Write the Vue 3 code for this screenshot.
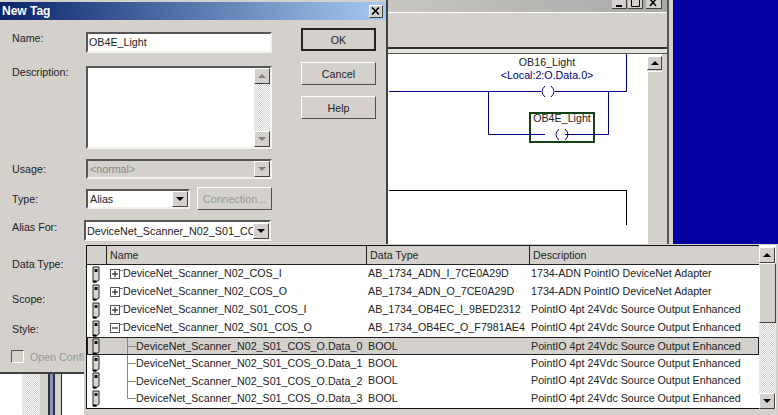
<template>
  <div class="desktop">
    <!-- ladder editor window behind the dialog -->
    <div class="editor">
      <div class="editor-title">
        <span class="win-btn">
          <svg width="9" height="8"><rect x="1" y="5" width="6" height="2" fill="#000" /></svg>
        </span>
        <span class="win-btn">
          <svg width="11" height="8"><path d="M1.500 0V6.500H9.500V0" fill="none" stroke="#000" /></svg>
        </span>
        <span class="win-btn win-close">
          <svg width="11" height="8"><path d="M2 -1l6 7M8 -1l-6 7" stroke="#000" stroke-width="1.500" /></svg>
        </span>
      </div>
      <div class="editor-toolbar"></div>
      <div class="editor-strip"></div>
      <div class="editor-main">
        <svg class="ladder" width="240" height="175" viewBox="0 0 240 175">
          <path d="M0 37.500H237.500V0" fill="none" stroke="#000080" />
          <path d="M99.500 37.500V80.500H219.500V37.500" fill="none" stroke="#000080" />
          <rect x="141" y="59" width="64" height="29" fill="#fff" stroke="#134313" stroke-width="2" />
          <path d="M141 80.500H219.500" fill="none" stroke="#000080" />
          <rect x="156" y="76" width="20" height="9" fill="#fff" />
          <rect x="152" y="33" width="14" height="9" fill="#fff" />
          <path d="M156 32q-6 5.500 0 11M162 32q6 5.500 0 11" fill="none" stroke="#000080" />
          <path d="M170 75q-6 5.500 0 11M176 75q6 5.500 0 11" fill="none" stroke="#000080" />
          <path d="M0 136.500H237" stroke="#000" />
          <path d="M237.500 136V171" stroke="#000" />
          <text x="158" y="12" text-anchor="middle" class="rung-text">OB16_Light</text>
          <text x="158" y="25" text-anchor="middle" class="rung-addr">&lt;Local:2:O.Data.0&gt;</text>
          <text x="173" y="68" text-anchor="middle" class="rung-text">OB4E_Light</text>
        </svg>
        <div class="editor-scroll">
          <span class="scroll-btn"><i class="arrow-up"></i></span>
          <span class="scroll-thumb"></span>
        </div>
      </div>
    </div>
    <div class="blue"></div>

    <!-- strips of other windows under the dialog -->
    <div class="under">
      <span class="u-dither"></span>
      <span class="u-grey"></span>
      <span class="u-dark"></span>
      <span class="u-blue"></span>
      <span class="u-dark"></span>
      <span class="u-grey2"></span>
      <span class="u-dark1"></span>
    </div>

    <div class="dialog">
      <div class="titlebar">
        <span>New Tag</span>
        <span class="title-x">
          <svg width="10" height="9"><path d="M1 0.500l7 7M8 0.500l-7 7" stroke="#000" stroke-width="1.600" /></svg>
        </span>
      </div>
      <div class="dialog-body">
        <div class="form">
          <div class="row row-name">
            <label>Name:</label>
            <div class="sunken input">OB4E_Light</div>
          </div>
          <div class="row row-desc">
            <label>Description:</label>
            <div class="sunken textarea">
              <div class="vscroll">
                <span class="scroll-btn"><i class="arrow-up grey"></i></span>
                <span class="dither"></span>
                <span class="scroll-btn"><i class="arrow-down grey"></i></span>
              </div>
            </div>
          </div>
          <div class="row row-usage">
            <label>Usage:</label>
            <div class="sunken select disabled">
              <span>&lt;normal&gt;</span>
              <span class="scroll-btn"><i class="arrow-down grey"></i></span>
            </div>
          </div>
          <div class="row row-type">
            <label>Type:</label>
            <div class="sunken select type">
              <span>Alias</span>
              <span class="scroll-btn"><i class="arrow-down"></i></span>
            </div>
            <button class="btn conn">Connection...</button>
          </div>
          <div class="row row-alias">
            <label>Alias For:</label>
            <div class="sunken select alias">
              <span class="alias-text">DeviceNet_Scanner_N02_S01_CC</span>
              <span class="scroll-btn"><i class="arrow-down"></i></span>
            </div>
          </div>
          <div class="row row-dtype"><label>Data Type:</label></div>
          <div class="row row-scope"><label>Scope:</label></div>
          <div class="row row-style"><label>Style:</label></div>
          <div class="row row-open">
            <span class="check"></span>
            <span class="open-text">Open Confi</span>
          </div>
        </div>
        <div class="buttons">
          <button class="btn btn-default">OK</button>
          <button class="btn">Cancel</button>
          <button class="btn">Help</button>
        </div>
      </div>
    </div>

    <!-- tag browser dropdown -->
    <div class="browser">
      <div class="grid">
        <div class="head">
          <span class="c-icon"></span>
          <span class="c-name">Name</span>
          <span class="c-type">Data Type</span>
          <span class="c-desc">Description</span>
        </div>
        <div
          v-for="(row, i) in rows"
          :key="row.name"
          class="tag-row"
          :class="{ selected: row.selected, child: row.child }"
        >
          <span class="c-icon">
            <svg width="8" height="17" viewBox="0 0 8 17">
              <path d="M1 1h6v13l-3 2h-3z" fill="#d8d8d0" stroke="#222" />
              <rect x="2.500" y="3" width="3" height="3" fill="#111" />
              <path d="M1 15.500h3.500" stroke="#000" stroke-width="2" />
            </svg>
          </span>
          <span class="c-name">
            <svg v-if="!row.child" class="tree" width="13" height="11" viewBox="0 0 13 11">
              <rect x="0.500" y="0.500" width="9" height="9" fill="#fff" stroke="#555" />
              <path d="M2 5h6" stroke="#000" />
              <path v-if="row.closed" d="M5 2v6" stroke="#000" />
              <path d="M10 1.500h3" stroke="#777" />
            </svg>
            <svg v-else class="tree-child" width="9" height="18" viewBox="0 0 9 18">
              <path :d="i === rows.length - 1 ? 'M0.500 0V9.500H9' : 'M0.500 0V18M0.500 9.500H9'" fill="none" stroke="#888" />
            </svg>
            {{ row.name }}
          </span>
          <span class="c-type">{{ row.type }}</span>
          <span class="c-desc">{{ row.desc }}</span>
        </div>
      </div>
      <div class="list-scroll">
        <span class="scroll-btn"><i class="arrow-up"></i></span>
        <span class="list-thumb"></span>
        <span class="dither"></span>
        <span class="scroll-btn"><i class="arrow-down"></i></span>
      </div>
    </div>
  </div>
</template>

<script setup>
const pointIO = 'PointIO 4pt 24Vdc Source Output Enhanced'
const adapter = '1734-ADN PointIO DeviceNet Adapter'
const base = 'DeviceNet_Scanner_N02_S01_COS_O'

const rows = [
  { name: 'DeviceNet_Scanner_N02_COS_I', type: 'AB_1734_ADN_I_7CE0A29D', desc: adapter, closed: true },
  { name: 'DeviceNet_Scanner_N02_COS_O', type: 'AB_1734_ADN_O_7CE0A29D', desc: adapter, closed: true },
  { name: 'DeviceNet_Scanner_N02_S01_COS_I', type: 'AB_1734_OB4EC_I_9BED2312', desc: pointIO, closed: true },
  { name: base, type: 'AB_1734_OB4EC_O_F7981AE4', desc: pointIO, closed: false },
  { name: base + '.Data_0', type: 'BOOL', desc: pointIO, child: true, selected: true },
  { name: base + '.Data_1', type: 'BOOL', desc: pointIO, child: true },
  { name: base + '.Data_2', type: 'BOOL', desc: pointIO, child: true },
  { name: base + '.Data_3', type: 'BOOL', desc: pointIO, child: true }
]
</script>

<style>
html,
body {
  margin: 0;
  background: #fff;
}
</style>

<style scoped>
.desktop {
  position: relative;
  width: 778px;
  height: 415px;
  overflow: hidden;
  background: #fff;
  font-family: 'Liberation Sans', Arial, sans-serif;
  font-size: 10.7px;
  color: #222;
}

/* editor window */
.editor {
  position: absolute;
  left: 380px;
  top: 0;
  width: 289px;
  height: 415px;
  box-sizing: border-box;
  display: flex;
  flex-direction: column;
  background: #d4d1cc;
  border-right: 2px solid #555;
  box-shadow: 4px 0 0 #d4d1cc;
}
.editor-title {
  height: 13px;
  box-sizing: border-box;
  flex: none;
  display: flex;
  justify-content: flex-end;
  align-items: flex-start;
  gap: 1px;
  padding-right: 5px;
  background: linear-gradient(90deg, #c9c7c2, #a8a8a8);
  border-bottom: 1px solid #fff;
}
.win-btn {
  width: 15px;
  height: 9px;
  flex: none;
  display: flex;
  align-items: flex-end;
  justify-content: center;
  background: #d4d1cc;
  border-right: 1px solid #404040;
  border-bottom: 1px solid #404040;
  box-sizing: border-box;
}
.win-close {
  margin-left: 2px;
  width: 16px;
}
.editor-toolbar {
  height: 36px;
  flex: none;
  box-sizing: border-box;
  border-bottom: 2px solid #303030;
}
.editor-strip {
  height: 5px;
  flex: none;
  box-sizing: border-box;
  background: #e4e2dc;
  border-bottom: 1px solid #555;
}
.editor-main {
  flex: 1;
  display: flex;
  background: #fff;
  padding-left: 9px;
  margin-right: 5px;
}
.ladder {
  flex: none;
}
.rung-text {
  font-size: 10.7px;
  fill: #222;
}
.rung-addr {
  font-size: 10.7px;
  fill: #000080;
}
.editor-scroll {
  margin-left: auto;
  width: 15px;
  margin-top: 2px;
  background: #d4d1cc;
  display: flex;
  flex-direction: column;
  gap: 1px;
}
.scroll-thumb {
  flex: 1;
  background: #d4d1cc;
  border-top: 1px solid #fff;
  border-left: 1px solid #fff;
}

.blue {
  position: absolute;
  left: 673px;
  top: 0;
  right: 0;
  height: 415px;
  background: #0000a0;
}

.under {
  position: absolute;
  left: 22px;
  top: 374px;
  height: 41px;
  display: flex;
}
.under span {
  display: block;
}
.u-dither {
  width: 18px;
  background: repeating-conic-gradient(#cfcfcf 0 25%, #fff 0 50%) 0 0 / 2px 2px;
}
.u-grey {
  width: 8px;
  background: #d4d1cc;
}
.u-dark {
  width: 2px;
  background: #303040;
}
.u-blue {
  width: 3px;
  background: #8c94b8;
}
.u-grey2 {
  width: 6px;
  background: #d4d1cc;
}
.u-dark1 {
  width: 1px;
  background: #202020;
}

/* dialog */
.dialog {
  position: absolute;
  left: 0;
  top: 0;
  width: 386px;
  height: 370px;
  background: #d4d1cc;
  border-right: 2px solid #404040;
  border-bottom: 2px solid #404040;
  padding-top: 2px;
}
.titlebar {
  height: 18px;
  box-sizing: border-box;
  padding: 0 3px 0 2px;
  display: flex;
  align-items: center;
  justify-content: space-between;
  background: linear-gradient(90deg, #0a246a, #a6caf0);
  color: #fff;
  font-weight: 700;
  font-size: 12px;
}
.title-x {
  width: 14px;
  height: 13px;
  display: flex;
  align-items: center;
  justify-content: center;
  background: #d4d1cc;
  border: 1px solid;
  border-color: #fff #404040 #404040 #fff;
  box-sizing: border-box;
}
.dialog-body {
  display: flex;
}
.form {
  width: 301px;
  flex: none;
}
.row {
  display: flex;
  padding-left: 12px;
}
.row label {
  width: 74px;
  flex: none;
  line-height: 14px;
}
.row-name {
  margin-top: 12px;
}
.row-name label {
  margin-top: -1px;
}
.row-desc {
  margin-top: 13px;
}
.row-desc label {
  margin-top: -1px;
}
.row-usage {
  margin-top: 10px;
  align-items: center;
}
.row-usage label {
  margin-top: -1px;
}
.row-type {
  margin-top: 8px;
  align-items: center;
}
.row-alias {
  margin-top: 10px;
  align-items: flex-start;
}
.row-alias label {
  width: 72px;
}
.row-dtype {
  margin-top: 16px;
}
.row-scope {
  margin-top: 21px;
}
.row-style {
  margin-top: 16px;
}
.row-open {
  margin-top: 14px;
  align-items: center;
  gap: 6px;
  padding-left: 11px;
}
.sunken {
  box-sizing: border-box;
  background: #fff;
  border: 2px solid;
  border-color: #555 #f4f2ee #f4f2ee #555;
}
.input {
  width: 186px;
  height: 21px;
  line-height: 17px;
  padding-left: 1px;
}
.textarea {
  width: 186px;
  height: 83px;
  display: flex;
  justify-content: flex-end;
}
.vscroll {
  width: 16px;
  display: flex;
  flex-direction: column;
}
.dither {
  flex: 1;
  background: repeating-conic-gradient(#cfcfcf 0 25%, #fff 0 50%) 0 0 / 2px 2px;
}
.select {
  height: 20px;
  display: flex;
  align-items: center;
  justify-content: space-between;
  padding-left: 2px;
  white-space: nowrap;
}
.select.disabled {
  width: 186px;
  background: #d4d1cc;
  color: #888;
}
.select.type {
  width: 104px;
  margin-right: 7px;
}
.select.alias {
  width: 187px;
  height: 21px;
  padding-left: 1px;
}
.alias-text {
  flex: 1;
  min-width: 0;
  overflow: hidden;
  font-size: 10.8px;
}
.scroll-btn {
  width: 16px;
  height: 16px;
  flex: none;
  display: flex;
  align-items: center;
  justify-content: center;
  box-sizing: border-box;
  background: #d4d1cc;
  border: 1px solid;
  border-color: #fff #404040 #404040 #fff;
}
.editor-scroll .scroll-btn {
  width: 15px;
  height: 14px;
}
.arrow-up,
.arrow-down {
  display: block;
  width: 0;
  height: 0;
  border-left: 4px solid transparent;
  border-right: 4px solid transparent;
}
.arrow-up {
  border-bottom: 4px solid #000;
}
.arrow-down {
  border-top: 4px solid #000;
}
.arrow-up.grey {
  border-bottom-color: #808080;
}
.arrow-down.grey {
  border-top-color: #808080;
}
.btn {
  display: block;
  box-sizing: border-box;
  width: 75px;
  height: 23px;
  padding: 0;
  background: #d4d1cc;
  border: 1px solid;
  border-color: #fff #505050 #505050 #fff;
  font-family: inherit;
  font-size: 10.7px;
  color: #222;
}
.btn-default {
  border: 2px solid #222;
}
.conn {
  color: #999;
}
.buttons {
  flex: none;
  padding-top: 8px;
  display: flex;
  flex-direction: column;
  gap: 11px;
}
.check {
  width: 13px;
  height: 13px;
  flex: none;
  box-sizing: border-box;
  border: 1px solid;
  border-color: #555 #fff #fff #555;
}
.open-text {
  color: #999;
  white-space: nowrap;
}

/* tag browser */
.browser {
  position: absolute;
  left: 84px;
  top: 244px;
  width: 694px;
  height: 171px;
  box-sizing: border-box;
  padding: 1px 2px 6px 2px;
  background: #d4d1cc;
  display: flex;
}
.grid {
  flex: 1;
  background: #fff;
  border: 1px solid #111;
  border-right: 0;
  min-width: 0;
}
.head {
  display: grid;
  grid-template-columns: 19px 260px 163px 1fr;
  height: 19px;
  box-sizing: border-box;
  line-height: 18px;
  background: #d4d1cc;
  border-bottom: 1px solid #222;
}
.head .c-name,
.head .c-type,
.head .c-desc {
  border-left: 1px solid #222;
  padding-left: 3px;
}
.tag-row {
  display: grid;
  grid-template-columns: 19px 260px 163px 1fr;
  height: 18px;
  padding-bottom: 3px;
  white-space: nowrap;
  box-sizing: border-box;
  align-items: center;
}
.tag-row.child {
  height: 17.330px;
  padding-bottom: 1px;
}
.tag-row.selected {
  height: 18px;
  background: #d4d1cc;
  outline: 1px solid #222;
  outline-offset: -1px;
}
.tag-row .c-icon {
  margin-bottom: -3px;
  padding-right: 2px;
}
.tag-row.child .c-icon {
  margin-bottom: -1px;
}
.tag-row .c-desc {
  padding-left: 2px;
}
.tag-row .c-type {
  padding-left: 2px;
}
.c-icon {
  display: flex;
  align-items: center;
  justify-content: center;
}
.c-name {
  display: flex;
  align-items: center;
  padding-left: 4px;
  overflow: hidden;
}
.head .c-name {
  display: block;
}
.tree {
  flex: none;
  margin-top: 4px;
}
.tree-child {
  flex: none;
  margin-left: 17px;
}
.list-scroll {
  width: 17px;
  flex: none;
  display: flex;
  flex-direction: column;
  background: #fff;
  box-sizing: border-box;
  padding-top: 2px;
}
.list-thumb {
  height: 60px;
  flex: none;
  background: #d4d1cc;
  border: 1px solid;
  border-color: #fff #404040 #404040 #fff;
  box-sizing: border-box;
}
</style>
